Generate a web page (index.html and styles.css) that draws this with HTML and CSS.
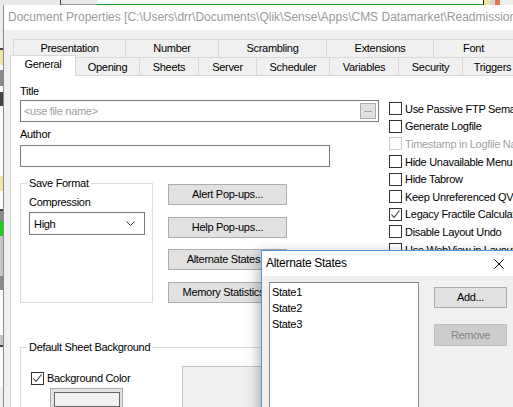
FILE: index.html
```html
<!DOCTYPE html>
<html>
<head>
<meta charset="utf-8">
<title>Document Properties</title>
<link rel="stylesheet" href="styles.css">
</head>
<body>
<div class="screen">
  <div class="topstrip">
    <span class="ts ts-grey1"></span><span class="ts ts-tick"></span><span class="ts ts-grey2"></span><span class="ts ts-green"></span><span class="ts ts-dark"></span><span class="ts ts-yellow"></span><span class="ts ts-grey3"></span><span class="ts ts-orange"></span><span class="ts ts-rest"></span>
  </div>
  <div class="main">
    <div class="leftstrip">
      <span class="ls ls-h43 ls-light"></span>
      <span class="ls ls-h2 ls-dark"></span>
      <span class="ls ls-h15 ls-yellow"></span>
      <span class="ls ls-h5 ls-white"></span>
      <span class="ls ls-h16 ls-mid"></span>
      <span class="ls ls-h6 ls-white"></span>
      <span class="ls ls-h14 ls-dark"></span>
      <span class="ls ls-h70 ls-white"></span>
      <span class="ls ls-h15 ls-yellow"></span>
      <span class="ls ls-h18 ls-white"></span>
      <span class="ls ls-h2 ls-dark"></span>
      <span class="ls ls-h10 ls-mid"></span>
      <span class="ls ls-h15 ls-green"></span>
      <span class="ls ls-h40 ls-grey"></span>
      <span class="ls ls-h14 ls-mid"></span>
      <span class="ls ls-h45 ls-white"></span>
      <span class="ls ls-h10 ls-grey"></span>
      <span class="ls ls-h2 ls-dark"></span>
      <span class="ls ls-h40 ls-white"></span>
    </div>
    <div class="window">
      <div class="titlebar">Document Properties [C:\Users\drr\Documents\Qlik\Sense\Apps\CMS Datamarket\Readmissions.qvw]</div>
      <div class="winbody">
        <div class="tabrow back">
          <div class="tab first t-pres">Presentation</div>
          <div class="tab t-num">Number</div>
          <div class="tab t-scr">Scrambling</div>
          <div class="tab t-ext">Extensions</div>
          <div class="tab t-font">Font</div>
        </div>
        <div class="tabrow front">
          <div class="tab sel t-gen">General</div>
          <div class="tab t-open">Opening</div>
          <div class="tab t-sheets">Sheets</div>
          <div class="tab t-server">Server</div>
          <div class="tab t-sched">Scheduler</div>
          <div class="tab t-vars">Variables</div>
          <div class="tab t-sec">Security</div>
          <div class="tab t-trig">Triggers</div>
        </div>
        <div class="panel">
          <div class="top-area">
            <div class="leftcol">
              <div class="lbl lbl-title">Title</div>
              <div class="input title-input">
                <span class="placeholder">&lt;use file name&gt;</span>
                <span class="browse">...</span>
              </div>
              <div class="lbl lbl-author">Author</div>
              <div class="input author-input"></div>
              <div class="lower">
                <fieldset class="group save-group">
                  <legend>Save Format</legend>
                  <div class="gb-body">
                    <div class="lbl comp-lbl">Compression</div>
                    <div class="combo">
                      <span>High</span>
                      <svg class="chev" width="9" height="5" viewBox="0 0 9 5"><polyline points="0.5,0.5 4.5,4.5 8.5,0.5" fill="none" stroke="#333" stroke-width="1"/></svg>
                    </div>
                  </div>
                </fieldset>
                <div class="btncol">
                  <div class="btn">Alert Pop-ups...</div>
                  <div class="btn">Help Pop-ups...</div>
                  <div class="btn">Alternate States...</div>
                  <div class="btn">Memory Statistics...</div>
                </div>
              </div>
            </div>
            <div class="rightcol">
              <div class="chk"><span class="box"></span><span class="ctext">Use Passive FTP Semaphore</span></div>
              <div class="chk"><span class="box"></span><span class="ctext">Generate Logfile</span></div>
              <div class="chk disabled"><span class="box"></span><span class="ctext">Timestamp in Logfile Name</span></div>
              <div class="chk"><span class="box"></span><span class="ctext">Hide Unavailable Menu Options</span></div>
              <div class="chk"><span class="box"></span><span class="ctext">Hide Tabrow</span></div>
              <div class="chk"><span class="box"></span><span class="ctext">Keep Unreferenced QVD Buffers</span></div>
              <div class="chk"><span class="box"><svg width="11" height="11" viewBox="0 0 11 11"><polyline points="1.5,5.5 4,8.5 9.5,1.5" fill="none" stroke="#333" stroke-width="1.1"/></svg></span><span class="ctext">Legacy Fractile Calculation</span></div>
              <div class="chk"><span class="box"></span><span class="ctext">Disable Layout Undo</span></div>
              <div class="chk"><span class="box"></span><span class="ctext">Use WebView in Layout</span></div>
            </div>
          </div>
          <fieldset class="group sheet-group">
            <legend>Default Sheet Background</legend>
            <div class="sheet-body">
              <div class="sheet-left">
                <div class="chk bgcolor"><span class="box"><svg width="11" height="11" viewBox="0 0 11 11"><polyline points="1.5,5.5 4,8.5 9.5,1.5" fill="none" stroke="#333" stroke-width="1.1"/></svg></span><span class="ctext">Background Color</span></div>
                <div class="colorbtn"><div class="swatch"></div></div>
              </div>
              <div class="preview"></div>
            </div>
          </fieldset>
        </div>
      </div>
    </div>
  </div>

  <div class="dialog">
    <div class="dlg-title">
      <span>Alternate States</span>
      <svg class="close" width="10" height="10" viewBox="0 0 10 10"><line x1="0.5" y1="0.5" x2="9.5" y2="9.5" stroke="#000" stroke-width="1"/><line x1="9.5" y1="0.5" x2="0.5" y2="9.5" stroke="#000" stroke-width="1"/></svg>
    </div>
    <div class="dlg-body">
      <div class="listbox">
        <div class="item">State1</div>
        <div class="item">State2</div>
        <div class="item">State3</div>
      </div>
      <div class="dlg-btns">
        <div class="btn dlg-btn">Add...</div>
        <div class="btn dlg-btn btn-disabled">Remove</div>
      </div>
    </div>
  </div>
</div>
</body>
</html>
```

FILE: styles.css
```css
* { box-sizing: border-box; }
html, body { margin: 0; padding: 0; }
body {
  width: 513px;
  height: 407px;
  overflow: hidden;
  background: #f0f0f0;
  font-family: "Liberation Sans", Arial, sans-serif;
  font-size: 11px;
  letter-spacing: -0.3px;
  color: #000;
}
.screen { position: relative; width: 513px; height: 407px; overflow: hidden; }

/* background app strips */
.topstrip { display: flex; height: 5px; }
.ts { display: block; height: 5px; }
.ts-grey1 { width: 60px; background: #e9e9e9; }
.ts-tick { width: 1px; background: #444; }
.ts-grey2 { width: 36px; background: #e9e9e9; border-bottom: 1px solid #999; }
.ts-green { width: 386px; background: #fff; border-bottom: 1px solid #2ca02c; }
.ts-dark { width: 1px; background: #222; }
.ts-yellow { width: 6px; background: #f1e9a3; }
.ts-grey3 { width: 5px; background: #d6d6d6; }
.ts-orange { width: 5px; background: #e0784a; }
.ts-rest { flex: 1; background: #eee; }

.main { display: flex; height: 402px; }
.leftstrip { width: 3px; display: flex; flex-direction: column; overflow: hidden; }
.ls { display: block; flex-shrink: 0; }
.ls-h2 { height: 2px; } .ls-h5 { height: 5px; } .ls-h6 { height: 6px; }
.ls-h10 { height: 10px; } .ls-h14 { height: 14px; } .ls-h15 { height: 15px; }
.ls-h16 { height: 16px; } .ls-h18 { height: 18px; } .ls-h40 { height: 40px; }
.ls-h43 { height: 43px; } .ls-h45 { height: 45px; } .ls-h70 { height: 70px; }
.ls-light { background: #efefef; }
.ls-white { background: #fdfdfd; }
.ls-dark { background: #444; }
.ls-mid { background: #8a8a8a; }
.ls-yellow { background: #f0e8a2; }
.ls-green { background: #14d414; }
.ls-grey { background: #c6c6c6; }

/* main window */
.window {
  flex: 1;
  min-width: 0;
  border-left: 1px solid #8c8c8c;
  overflow: hidden;
  display: flex;
  flex-direction: column;
}
.titlebar {
  height: 25px;
  line-height: 25px;
  background: #fff;
  color: #9a9a9a;
  font-size: 12px;
  letter-spacing: 0;
  padding-left: 4px;
  white-space: nowrap;
}
.winbody {
  flex: 1;
  background: #f0f0f0;
  padding: 9px 0 0 6px;
  display: flex;
  flex-direction: column;
}

/* tabs */
.tabrow { display: flex; height: 18px; white-space: nowrap; flex-shrink: 0; }
.tabrow.back { margin-left: 3px; }
.tabrow.front { align-items: flex-end; position: relative; z-index: 2; }
.tab {
  flex-shrink: 0;
  height: 18px;
  line-height: 17px;
  text-align: center;
  border-top: 1px solid #d9d9d9;
  border-right: 1px solid #d9d9d9;
  background: #f0f0f0;
}
.tab.first { border-left: 1px solid #d9d9d9; }
.front .tab { line-height: 19px; }
.tab.sel {
  height: 21px;
  line-height: 17px;
  margin-bottom: -1px;
  background: #fff;
  border-left: 1px solid #d9d9d9;
}
.t-pres { width: 113px; } .t-num { width: 93px; } .t-scr { width: 108px; }
.t-ext { width: 107px; } .t-font { width: 80px; }
.t-gen { width: 66px; } .t-open { width: 64px; } .t-sheets { width: 59px; }
.t-server { width: 58px; } .t-sched { width: 73px; } .t-vars { width: 69px; }
.t-sec { width: 64px; } .t-trig { width: 60px; }

/* panel */
.panel {
  flex: 1;
  background: #fff;
  border-top: 1px solid #d9d9d9;
  border-left: 1px solid #d9d9d9;
  padding-left: 9px;
  display: flex;
  flex-direction: column;
}
.top-area { display: flex; }
.leftcol { width: 359px; flex-shrink: 0; }
.rightcol { margin-left: 10px; padding-top: 24px; white-space: nowrap; }

.lbl { height: 15px; line-height: 15px; white-space: nowrap; }
.lbl-title { margin-top: 8px; }
.lbl-author { margin-top: 5px; }
.input {
  height: 22px;
  border: 1px solid #7a7a7a;
  background: #fff;
}
.title-input {
  margin-top: 1px;
  width: 359px;
  display: flex;
  align-items: center;
  justify-content: space-between;
  padding: 0 2px 0 3px;
}
.placeholder { color: #a0a0a0; }
.browse {
  width: 16px;
  height: 16px;
  background: #e1e1e1;
  border: 1px solid #adadad;
  font-size: 9px;
  line-height: 11px;
  text-align: center;
  color: #334;
  letter-spacing: 0;
}
.author-input { margin-top: 3px; width: 310px; }

.lower { display: flex; margin-top: 9px; }
.group {
  margin: 0;
  border: 1px solid #dcdcdc;
  min-width: 0;
}
.group legend { padding: 0 2px; line-height: 15px; height: 15px; white-space: nowrap; }
.save-group { width: 133px; padding: 0 6px 10px 6px; }
.gb-body { padding-left: 2px; }
.comp-lbl { margin-top: 4px; }
.combo {
  margin-top: 2px;
  width: 116px;
  height: 23px;
  border: 1px solid #7a7a7a;
  background: #fff;
  display: flex;
  align-items: center;
  justify-content: space-between;
  padding: 0 9px 0 4px;
}
.btncol { margin-left: 15px; padding-top: 8px; display: flex; flex-direction: column; gap: 11.5px; }
.btn {
  width: 119px;
  height: 21px;
  line-height: 19px;
  text-align: center;
  background: #e1e1e1;
  border: 1px solid #adadad;
  white-space: nowrap;
  overflow: hidden;
}

/* checkboxes */
.chk { display: flex; align-items: center; height: 17.6px; }
.box {
  width: 13px;
  height: 13px;
  border: 1px solid #333;
  background: #fff;
  flex-shrink: 0;
  display: flex;
  align-items: center;
  justify-content: center;
}
.ctext { margin-left: 3px; white-space: nowrap; }
.chk.disabled .box { border-color: #cccccc; }
.chk.disabled .ctext { color: #a2a2a2; }

/* sheet background group */
.sheet-group { margin-top: 37px; width: 520px; padding: 0 6px; flex: 1; }
.sheet-body { display: flex; }
.sheet-left { width: 155px; flex-shrink: 0; padding-top: 16px; }
.bgcolor { margin-left: 4px; height: 15px; }
.colorbtn {
  margin-top: 2px;
  margin-left: 23px;
  width: 73px;
  height: 22px;
  background: #e1e1e1;
  border: 1px solid #adadad;
  padding: 3px 2px 0 3px;
}
.swatch { height: 15px; border: 1px solid #666; background: #f2f2f2; }
.preview {
  margin-top: 11px;
  width: 200px;
  height: 80px;
  background: #f0f0f0;
  border: 1px solid #c4c4c4;
}

/* alternate states dialog */
.dialog {
  position: absolute;
  left: 261px;
  top: 250px;
  width: 262px;
  height: 180px;
  border: 1px solid #4d97dc;
  background: #f0f0f0;
  box-shadow: -3px 3px 12px rgba(0, 0, 0, 0.28);
  display: flex;
  flex-direction: column;
}
.dlg-title {
  height: 25px;
  flex-shrink: 0;
  background: #fff;
  display: flex;
  align-items: center;
  padding: 0 0 2px 4px;
  font-size: 12px;
  white-space: nowrap;
}
.close { margin-left: auto; margin-right: 18px; margin-top: 2px; }
.dlg-body { flex: 1; display: flex; padding: 6px 0 0 7px; }
.listbox {
  width: 150px;
  height: 150px;
  flex-shrink: 0;
  background: #fff;
  border: 1px solid #828790;
  padding: 1px 0 0 2px;
}
.item { height: 16px; line-height: 16px; }
.dlg-btns { margin-left: 15px; padding-top: 5px; display: flex; flex-direction: column; gap: 16px; }
.dlg-btn { width: 73px; }
.btn-disabled {
  height: 22px;
  line-height: 20px;
  background: #cccccc;
  border-color: #bfbfbf;
  color: #838383;
}
```
